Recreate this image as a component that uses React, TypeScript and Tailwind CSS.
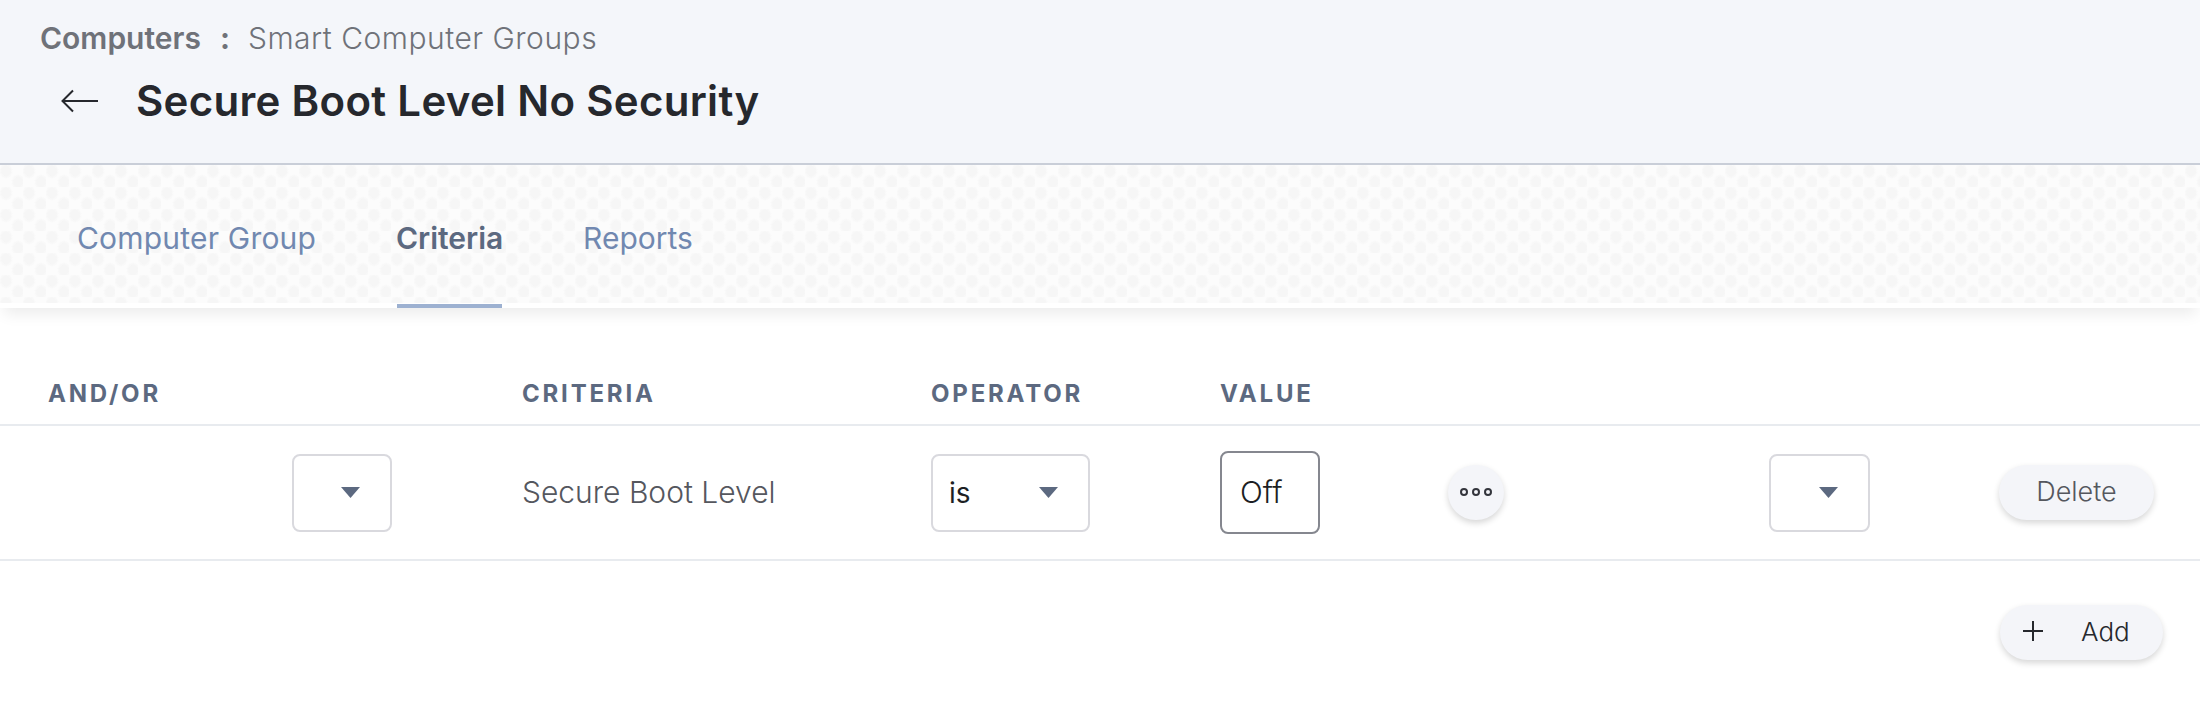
const font = "font-['Inter','Open_Sans',sans-serif]";

function Caret({ className = "" }: { className?: string }) {
  return (
    <svg width="19" height="11" viewBox="0 0 19 11" className={className}>
      <path d="M0 0H19L9.5 11Z" fill="#5c6980" />
    </svg>
  );
}

function Select({ width, label }: { width: string; label?: string }) {
  return (
    <div className={`${width} h-[78px] shrink-0 rounded-[8px] border-2 border-[#d9d9de] bg-white flex items-center pl-[16px] pr-[30px]`}>
      {label && <span className="text-[28px] text-[#1d1f24] flex-1">{label}</span>}
      <Caret className="ml-auto" />
    </div>
  );
}

export default function App() {
  return (
    <div className={`${font} w-[2200px] h-[708px] bg-white overflow-hidden`}>
      <header className="h-[165px] bg-[#f4f6fa] border-b-2 border-[#c9ced8] pl-[40px] pt-[21px]">
        <div className="flex items-center h-[34px] text-[30px] text-[#6f7279] leading-none">
          <span className="font-semibold">Computers</span>
          <span className="font-bold ml-[19px] mr-[18px]">:</span>
          <span className="font-light tracking-[0.5px]">Smart Computer Groups</span>
        </div>
        <div className="flex items-center mt-[21px] h-[50px]">
          <svg width="38" height="24" viewBox="0 0 38 24" className="ml-[21px]" fill="none" stroke="#26282d" strokeWidth="2">
            <path d="M37 12H2M12 1.5L1.5 12L12 22.5" />
          </svg>
          <h1 className="ml-[37px] text-[42px] font-semibold text-[#26282d] leading-none tracking-[0.3px]">Secure Boot Level No Security</h1>
        </div>
      </header>

      <nav className="h-[143px] flex pl-[77px] shadow-[0_10px_14px_-4px_rgba(0,0,0,0.08)] relative bg-white pb-[5px]">
        <div className="absolute inset-x-0 top-0 bottom-[5px] bg-[#fcfcfc] bg-[radial-gradient(ellipse_7px_8px_at_6px_6px,#f6f6f6_60%,transparent_100%),radial-gradient(ellipse_7px_8px_at_18px_17px,#f6f6f6_60%,transparent_100%)] bg-[length:23px_22px]" />
        <div className="relative flex items-stretch text-[30px] text-[#7188b0] -mb-[5px]">
          <div className="flex items-center pt-[4px] tracking-[0.2px]">Computer Group</div>
          <div className="ml-[81px] w-[105px] flex items-center justify-center pt-[8px] border-b-[4px] border-[#9db1d1] font-semibold text-[#5c6980]">Criteria</div>
          <div className="ml-[81px] flex items-center pt-[4px]">Reports</div>
        </div>
      </nav>

      <section className="mt-[59px]">
        <div className="flex h-[59px] border-b-2 border-[#e8ebef] text-[24px] font-bold tracking-[2.8px] text-[#5c6980] leading-none pb-[18px] items-end">
          <div className="w-[522px] pl-[48px]">AND/OR</div>
          <div className="w-[409px]">CRITERIA</div>
          <div className="w-[289px]">OPERATOR</div>
          <div>VALUE</div>
        </div>
        <div className="flex items-center h-[135px] border-b-2 border-[#e8ebef]">
          <div className="w-[522px] pl-[292px] shrink-0">
            <Select width="w-[100px]" />
          </div>
          <div className="w-[409px] shrink-0 text-[30px] font-light text-[#55575e]">Secure Boot Level</div>
          <div className="w-[289px] shrink-0">
            <Select width="w-[159px]" label="is" />
          </div>
          <div className="w-[228px] shrink-0">
            <div className="w-[100px] h-[83px] rounded-[8px] border-2 border-[#85878f] bg-white flex items-center pl-[18px] text-[30px] font-light text-[#1d1f24]">Off</div>
          </div>
          <div className="w-[321px] shrink-0">
            <button className="w-[56px] h-[55px] rounded-full bg-[#f4f5f9] shadow-[0_3px_6px_rgba(0,0,0,0.16)] flex items-center justify-center gap-[4px] pb-[2px]">
              <span className="w-[8px] h-[8px] rounded-full border-2 border-[#33353c]" />
              <span className="w-[8px] h-[8px] rounded-full border-2 border-[#33353c]" />
              <span className="w-[8px] h-[8px] rounded-full border-2 border-[#33353c]" />
            </button>
          </div>
          <div className="w-[230px] shrink-0">
            <Select width="w-[101px]" />
          </div>
          <button className="w-[155px] h-[55px] rounded-full bg-[#f4f5f9] shadow-[0_3px_6px_rgba(0,0,0,0.16)] text-[27px] font-light text-[#55575e] flex items-center justify-center">Delete</button>
        </div>
        <div className="flex justify-end pr-[37px] pt-[44px]">
          <button className="w-[163px] h-[55px] rounded-full bg-[#f4f5f9] shadow-[0_3px_6px_rgba(0,0,0,0.16)] flex items-center text-[26px] font-light text-[#26282d] pl-[23px] pb-[2px]">
            <svg width="20" height="20" viewBox="0 0 20 20" stroke="#26282d" strokeWidth="2" className="-mt-[1px]"><path d="M10 0V20M0 10H20" /></svg>
            <span className="ml-[38px]">Add</span>
          </button>
        </div>
      </section>
    </div>
  );
}
